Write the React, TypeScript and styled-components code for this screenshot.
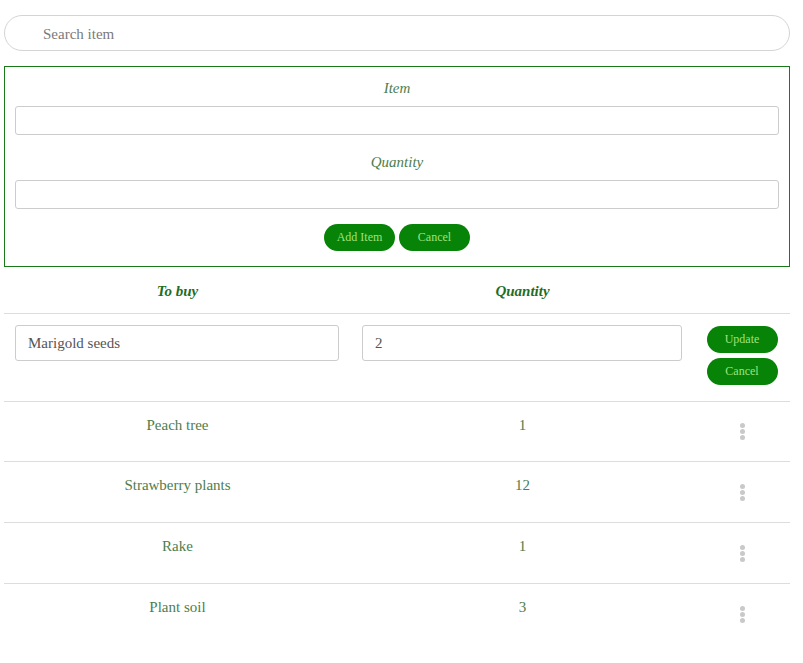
import { createGlobalStyle } from 'styled-components';
import styled from 'styled-components';

const GlobalStyle = createGlobalStyle`
  body {
    margin: 0;
    background: #fff;
    font-family: "Liberation Serif", "DejaVu Serif", serif;
    font-size: 15px;
    color: #4e7d4e;
  }
  * { box-sizing: border-box; }
`;

const Page = styled.div`
  padding: 15px 13px 0 4px;
  display: flex;
  flex-direction: column;
`;

const SearchInput = styled.input`
  width: 100%;
  height: 36px;
  border: 1px solid #d4d4d4;
  border-radius: 18px;
  padding: 3px 0 0 38px;
  font-family: inherit;
  font-size: 15px;
  color: #555;
  outline: none;
  &::placeholder { color: #7a7a7a; }
`;

const FormBox = styled.form`
  margin-top: 15px;
  border: 1px solid #1a7a1a;
  padding: 12px 10px 15px;
  display: flex;
  flex-direction: column;
  align-items: stretch;
`;

const Label = styled.label`
  text-align: center;
  font-style: italic;
  color: #4e7d4e;
  line-height: 18px;
  margin-bottom: 9px;
`;

const FieldInput = styled.input`
  height: 29px;
  border: 1px solid #ccc;
  border-radius: 3px;
  margin-bottom: 18px;
  font-family: inherit;
  font-size: 15px;
  &:last-of-type { margin-bottom: 15px; }
`;

const ButtonRow = styled.div`
  display: flex;
  justify-content: center;
  gap: 4px;
`;

const PillButton = styled.button<{ $w: number }>`
  width: ${(p) => p.$w}px;
  height: 27px;
  border: none;
  border-radius: 14px;
  background: #078307;
  color: #9fe27f;
  font-family: inherit;
  font-size: 12px;
  cursor: pointer;
  padding: 0;
`;

const Table = styled.div`
  display: flex;
  flex-direction: column;
`;

const Row = styled.div<{ $h: number }>`
  display: grid;
  grid-template-columns: 347px 343px 1fr;
  height: ${(p) => p.$h}px;
  border-bottom: 1px solid #ddd;
  &:last-child { border-bottom: none; }
`;

const HeadCell = styled.div`
  display: flex;
  align-items: center;
  justify-content: center;
  font-style: italic;
  font-weight: bold;
  color: #1f6e1f;
  padding-top: 2px;
`;

const EditCell = styled.div`
  padding: 11px 12px 0 11px;
`;

const EditInput = styled.input`
  width: 100%;
  height: 36px;
  border: 1px solid #ccc;
  border-radius: 3px;
  padding: 0 12px;
  font-family: inherit;
  font-size: 15px;
  color: #555;
`;

const ActionCell = styled.div`
  display: flex;
  flex-direction: column;
  align-items: center;
  gap: 5px;
  padding-top: 12px;
`;

const TextCell = styled.div`
  text-align: center;
  padding-top: 14px;
  line-height: 18px;
`;

const MenuCell = styled.div`
  display: flex;
  align-items: center;
  justify-content: center;
`;

const Kebab = styled.button`
  border: none;
  background: none;
  padding: 0;
  display: flex;
  flex-direction: column;
  gap: 1px;
  cursor: pointer;
  span {
    width: 5px;
    height: 5px;
    border-radius: 50%;
    background: #c9c9c9;
  }
`;

const items = [
  { name: 'Peach tree', qty: 1, h: 60 },
  { name: 'Strawberry plants', qty: 12, h: 61 },
  { name: 'Rake', qty: 1, h: 61 },
  { name: 'Plant soil', qty: 3, h: 61 },
];

export default function App() {
  return (
    <>
      <GlobalStyle />
      <Page>
        <SearchInput placeholder="Search item" />
        <FormBox onSubmit={(e) => e.preventDefault()}>
          <Label>Item</Label>
          <FieldInput />
          <Label>Quantity</Label>
          <FieldInput />
          <ButtonRow>
            <PillButton $w={71}>Add Item</PillButton>
            <PillButton $w={71}>Cancel</PillButton>
          </ButtonRow>
        </FormBox>
        <Table>
          <Row $h={47}>
            <HeadCell>To buy</HeadCell>
            <HeadCell>Quantity</HeadCell>
            <div />
          </Row>
          <Row $h={88}>
            <EditCell>
              <EditInput defaultValue="Marigold seeds" />
            </EditCell>
            <EditCell>
              <EditInput defaultValue="2" />
            </EditCell>
            <ActionCell>
              <PillButton $w={71}>Update</PillButton>
              <PillButton $w={71}>Cancel</PillButton>
            </ActionCell>
          </Row>
          {items.map((it) => (
            <Row $h={it.h} key={it.name}>
              <TextCell>{it.name}</TextCell>
              <TextCell>{it.qty}</TextCell>
              <MenuCell>
                <Kebab aria-label="More">
                  <span />
                  <span />
                  <span />
                </Kebab>
              </MenuCell>
            </Row>
          ))}
        </Table>
      </Page>
    </>
  );
}
